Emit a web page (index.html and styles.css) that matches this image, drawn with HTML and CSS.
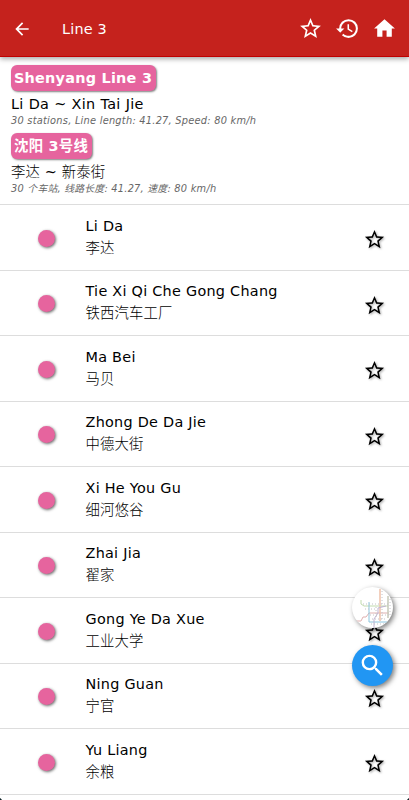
FILE: index.html
```
<!DOCTYPE html>
<html lang="en">
<head>
    <meta charset="UTF-8">
    <meta name="viewport" content="width=device-width, initial-scale=1.0">
    <title>Line 3</title>
    <link rel="stylesheet" href="styles.css">
</head>
<body>
    <div class="app">
        <header class="toolbar">
            <svg class="icon-back" viewBox="0 0 24 24"><path d="M20 11H7.83l5.59-5.59L12 4l-8 8 8 8 1.41-1.41L7.83 13H20v-2z"/></svg>
            <h1 class="title">Line 3</h1>
            <div class="actions">
                <svg viewBox="0 0 24 24"><path d="M22 9.24l-7.19-.62L12 2 9.19 8.63 2 9.24l5.46 4.73L5.82 21 12 17.27 18.18 21l-1.63-7.03L22 9.24zM12 15.4l-3.76 2.27 1-4.28-3.32-2.88 4.38-.38L12 6.1l1.71 4.04 4.38.38-3.32 2.88 1 4.28L12 15.4z"/></svg>
                <svg viewBox="0 0 24 24"><path d="M13 3a9 9 0 0 0-9 9H1l3.89 3.89.07.14L9 12H6c0-3.87 3.13-7 7-7s7 3.13 7 7-3.13 7-7 7c-1.93 0-3.68-.79-4.94-2.06l-1.42 1.42A8.95 8.95 0 0 0 13 21a9 9 0 0 0 0-18zm-1 5v5l4.28 2.54.72-1.21-3.5-2.08V8H12z"/></svg>
                <svg viewBox="0 0 24 24"><path d="M10 20v-6h4v6h5v-8h3L12 3 2 12h3v8z"/></svg>
            </div>
        </header>

        <section class="summary">
            <h2 class="badge">Shenyang Line 3</h2>
            <p class="route">Li Da ~ Xin Tai Jie</p>
            <p class="details">30 stations, Line length: 41.27, Speed: 80 km/h</p>
            <h2 class="badge">沈阳 3号线</h2>
            <p class="route route-zh">李达 <span class="tilde">~</span> 新泰街</p>
            <p class="details">30 个车站, 线路长度: 41.27, 速度: 80 km/h</p>
        </section>

        <ul class="stations">
            <li class="station">
                <span class="dot"></span>
                <div class="names"><p>Li Da</p><p class="zh">李达</p></div>
                <svg class="star" viewBox="0 0 24 24"><use href="#star"/></svg>
            </li>
            <li class="station">
                <span class="dot"></span>
                <div class="names"><p>Tie Xi Qi Che Gong Chang</p><p class="zh">铁西汽车工厂</p></div>
                <svg class="star" viewBox="0 0 24 24"><use href="#star"/></svg>
            </li>
            <li class="station">
                <span class="dot"></span>
                <div class="names"><p>Ma Bei</p><p class="zh">马贝</p></div>
                <svg class="star" viewBox="0 0 24 24"><use href="#star"/></svg>
            </li>
            <li class="station">
                <span class="dot"></span>
                <div class="names"><p>Zhong De Da Jie</p><p class="zh">中德大街</p></div>
                <svg class="star" viewBox="0 0 24 24"><use href="#star"/></svg>
            </li>
            <li class="station">
                <span class="dot"></span>
                <div class="names"><p>Xi He You Gu</p><p class="zh">细河悠谷</p></div>
                <svg class="star" viewBox="0 0 24 24"><use href="#star"/></svg>
            </li>
            <li class="station">
                <span class="dot"></span>
                <div class="names"><p>Zhai Jia</p><p class="zh">翟家</p></div>
                <svg class="star" viewBox="0 0 24 24"><use href="#star"/></svg>
            </li>
            <li class="station">
                <span class="dot"></span>
                <div class="names"><p>Gong Ye Da Xue</p><p class="zh">工业大学</p></div>
                <svg class="star" viewBox="0 0 24 24"><use href="#star"/></svg>
            </li>
            <li class="station">
                <span class="dot"></span>
                <div class="names"><p>Ning Guan</p><p class="zh">宁官</p></div>
                <svg class="star" viewBox="0 0 24 24"><use href="#star"/></svg>
            </li>
            <li class="station">
                <span class="dot"></span>
                <div class="names"><p>Yu Liang</p><p class="zh">余粮</p></div>
                <svg class="star" viewBox="0 0 24 24"><use href="#star"/></svg>
            </li>
        </ul>

        <!-- floating buttons -->
        <div class="fabs">
            <div class="fab fab-map">
                <svg viewBox="0 0 41 41" fill="none">
                    <path d="M9 13v4l3 2h24" stroke="#c2dbae"/>
                    <path d="M4 34h5l2-4h3l3-4h20" stroke="#dfb0b0"/>
                    <path d="M17 15v20h18" stroke="#8cc5dd"/>
                    <path d="M28 2v32" stroke="#efc0a8" stroke-width="1.5"/>
                    <path d="M36 9v22" stroke="#c6c9b8" stroke-width="1.5"/>
                    <path d="M22 41v-9l4-6v-5l8-2" stroke="#c0b2d2"/>
                    <path d="M11 17h25M18 28h19M19 37h15M30 4v28M38 12v17M24 20v10M13 22h12M20 32h14" stroke="#c2c2c8" stroke-dasharray="1 2"/>
                </svg>
            </div>
            <div class="fab fab-search">
                <svg viewBox="0 0 24 24"><path d="M15.5 14h-.79l-.28-.27A6.47 6.47 0 0 0 16 9.5 6.5 6.5 0 1 0 9.5 16c1.61 0 3.09-.59 4.23-1.57l.27.28v.79l5 4.99L20.49 19l-4.99-5zm-6 0C7.01 14 5 11.99 5 9.5S7.01 5 9.5 5 14 7.01 14 9.5 11.99 14 9.5 14z"/></svg>
            </div>
        </div>
        <span class="corner corner-left"></span>
        <span class="corner corner-right"></span>
    </div>

    <svg class="sprite">
        <symbol id="star" viewBox="0 0 24 24"><path d="M22 9.24l-7.19-.62L12 2 9.19 8.63 2 9.24l5.46 4.73L5.82 21 12 17.27 18.18 21l-1.63-7.03L22 9.24zM12 15.4l-3.76 2.27 1-4.28-3.32-2.88 4.38-.38L12 6.1l1.71 4.04 4.38.38-3.32 2.88 1 4.28L12 15.4z"/></symbol>
    </svg>
</body>
</html>
```
FILE: styles.css
```
* {
    box-sizing: border-box;
}

body {
    margin: 0;
    font-family: "DejaVu Sans", "Noto Sans CJK SC", sans-serif;
    font-size: 14.4px;
    color: #000;
    background-color: #fff;
}

h1, h2, p, ul {
    margin: 0;
    padding: 0;
}

.app {
    position: relative;
    height: 800px;
    overflow: hidden;
}

/* top bar */
.toolbar {
    display: flex;
    align-items: center;
    height: 57px;
    padding: 1px 12px 0 12px;
    background-color: #c5221d;
    border-bottom: 1px solid #c00000;
    box-shadow: 0 2px 5px rgba(0, 0, 0, 0.35);
}

.toolbar svg {
    fill: #fff;
}

.icon-back {
    width: 20px;
    height: 20px;
}

.title {
    margin-left: 30px;
    font-size: 14.4px;
    font-weight: normal;
    letter-spacing: 0.2px;
    color: #fff;
}

.actions {
    display: flex;
    gap: 12px;
    margin-left: auto;
}

.actions svg {
    width: 25px;
    height: 25px;
}

/* line summary */
.summary {
    height: 147px;
    padding: 8px 11px 0;
}

.badge {
    width: fit-content;
    height: 26px;
    padding: 0 4px 0 3px;
    border-radius: 6px;
    background-color: #e6649e;
    box-shadow: 1px 1px 2px rgba(0, 0, 0, 0.5);
    color: #fff;
    font-size: 14.4px;
    font-weight: bold;
    letter-spacing: 0.25px;
    line-height: 26px;
}

.route {
    height: 24px;
    line-height: 27px;
    letter-spacing: 0.35px;
}

.route-zh {
    font-weight: 300;
    letter-spacing: 0.15px;
}

.tilde {
    font-weight: normal;
}

.details {
    height: 18px;
    font-size: 9.8px;
    font-style: italic;
    line-height: 12px;
    letter-spacing: 0.25px;
    color: #666;
}

/* station list */
.stations {
    list-style: none;
    border-top: 1px solid #ddd;
}

.station {
    display: flex;
    align-items: center;
    height: 65.5px;
    padding: 0 23.5px 0 38px;
    border-bottom: 1px solid #ddd;
}

.dot {
    width: 17px;
    height: 17px;
    margin-top: 2px;
    border-radius: 50%;
    background-color: #e6649e;
    box-shadow: 1px 1px 3px rgba(0, 0, 0, 0.6);
}

.names {
    margin-left: 30.5px;
    line-height: 21px;
    letter-spacing: 0.27px;
}

.names .zh {
    font-weight: 300;
    letter-spacing: 0.1px;
    line-height: 22px;
}

.star {
    width: 23px;
    height: 23px;
    margin: 5px 0 0 auto;
    filter: drop-shadow(1px 1px 1px rgba(0, 0, 0, 0.35));
}

/* floating buttons */
.fabs {
    position: absolute;
    right: 16px;
    bottom: 114px;
    display: flex;
    flex-direction: column;
    gap: 17px;
}

.fab {
    display: flex;
    align-items: center;
    justify-content: center;
    width: 41px;
    height: 41px;
    border-radius: 50%;
    overflow: hidden;
    box-shadow: 2px 2px 5px rgba(0, 0, 0, 0.5);
}

.fab-map {
    background-color: #fff;
}

.fab-map svg {
    width: 41px;
    height: 41px;
}

.fab-search {
    background-color: #2196f3;
}

.fab-search svg {
    width: 29px;
    height: 29px;
    fill: #fff;
}

/* rounded screen corners */
.corner {
    position: absolute;
    bottom: 0;
    width: 4px;
    height: 4px;
}

.corner-left {
    left: 0;
    background: radial-gradient(circle at 100% 0, transparent 4px, #0c2024 4.5px);
}

.corner-right {
    right: 0;
    background: radial-gradient(circle at 0 0, transparent 4px, #0c2024 4.5px);
}

.sprite {
    display: none;
}
```
